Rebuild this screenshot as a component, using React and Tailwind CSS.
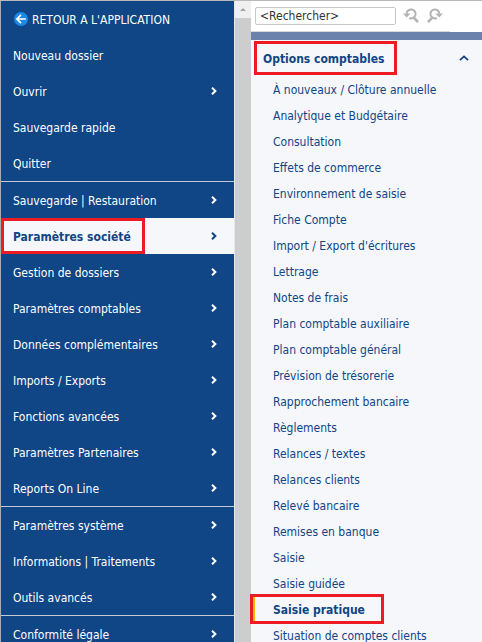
import React, { useState } from 'react';

const menuGroups = [
  [
    { label: 'Nouveau dossier' },
    { label: 'Ouvrir', sub: true },
    { label: 'Sauvegarde rapide' },
    { label: 'Quitter' },
  ],
  [
    { label: 'Sauvegarde | Restauration', sub: true },
    { label: 'Paramètres société', sub: true },
    { label: 'Gestion de dossiers', sub: true },
    { label: 'Paramètres comptables', sub: true },
    { label: 'Données complémentaires', sub: true },
    { label: 'Imports / Exports', sub: true },
    { label: 'Fonctions avancées', sub: true },
    { label: 'Paramètres Partenaires', sub: true },
    { label: 'Reports On Line', sub: true },
  ],
  [
    { label: 'Paramètres système', sub: true },
    { label: 'Informations | Traitements', sub: true },
    { label: 'Outils avancés', sub: true },
  ],
  [{ label: 'Conformité légale', sub: true }],
];

const options = [
  'À nouveaux / Clôture annuelle',
  'Analytique et Budgétaire',
  'Consultation',
  'Effets de commerce',
  'Environnement de saisie',
  'Fiche Compte',
  "Import / Export d'écritures",
  'Lettrage',
  'Notes de frais',
  'Plan comptable auxiliaire',
  'Plan comptable général',
  'Prévision de trésorerie',
  'Rapprochement bancaire',
  'Règlements',
  'Relances / textes',
  'Relances clients',
  'Relevé bancaire',
  'Remises en banque',
  'Saisie',
  'Saisie guidée',
  'Saisie pratique',
  'Situation de comptes clients',
];

const ChevronRight = () => (
  <svg viewBox="0 0 6 8" className="w-1.5 h-2 shrink-0" fill="none" stroke="currentColor" strokeWidth="2">
    <path d="M1 .7 4.4 4 1 7.3" />
  </svg>
);

const ChevronUp = ({ className = '' }) => (
  <svg viewBox="0 0 10 6" className={`w-2.5 h-1.5 shrink-0 ${className}`} fill="none" stroke="currentColor" strokeWidth="1.8">
    <path d="M1 5.2 5 1.4 9 5.2" />
  </svg>
);

const BackIcon = () => (
  <svg viewBox="0 0 14 14" className="w-3.5 h-3.5 shrink-0">
    <circle cx="7" cy="7" r="7" fill="#1e88e5" />
    <path d="M11.8 7H3.5M7 2.8 2.9 7 7 11.2" fill="none" stroke="#fff" strokeWidth="1.7" />
  </svg>
);

// Magnifier with an arrow head on its ring; the "next" one is mirrored
const SearchArrow = ({ flip }) => (
  <svg viewBox="0 0 16 16" className={`w-4 h-4 ${flip ? '-scale-x-100' : ''}`} fill="none" stroke="#b3b3b3" strokeWidth="2">
    <path d="M3.6 5.6A4.5 4.5 0 1 1 6.2 10" />
    <path d="M10.6 9.4 15 14.2" strokeWidth="2.6" />
    <path d="M0 5.4h7.6L3.8 9.4z" fill="#b3b3b3" stroke="none" />
  </svg>
);

export default function App() {
  const [active, setActive] = useState('Paramètres société');
  const [option, setOption] = useState('Saisie pratique');
  const [open, setOpen] = useState(true);

  return (
    <div className="flex h-screen overflow-hidden border-t border-[#b9b9b9] bg-[#f5f7fa] font-['DejaVu_Sans_Condensed','DejaVu_Sans',sans-serif] text-xs text-[#104586]">
      {/* Main menu */}
      <nav className="flex-none w-[235px] border-l border-[#a9adb3] border-r border-r-[#e4e6e9] bg-[#104586] text-white">
        <button className="flex items-center gap-1 w-full h-9 px-[13px]">
          <BackIcon />
          <span className="pt-0.5">RETOUR A L'APPLICATION</span>
        </button>
        {menuGroups.map((group, i) => (
          <div key={i} className={i > 0 ? 'border-t border-[#c3cad4]' : ''}>
            {group.map(item => {
              const isActive = item.label === active;
              return (
                <button
                  key={item.label}
                  onClick={() => setActive(item.label)}
                  className={`relative flex items-center justify-between w-full h-9 pl-3 pr-[17px] text-left ${isActive ? 'bg-[#f5f7fa] font-bold text-[#104586]' : ''}`}
                >
                  <span className="pt-0.5">{item.label}</span>
                  {item.sub && <ChevronRight />}
                  {isActive && <span className="absolute inset-y-0 left-0 w-36 border-3 border-[#ed1c24]" />}
                </button>
              );
            })}
          </div>
        ))}
      </nav>

      {/* Scrollbar */}
      <div className="flex-none w-4 bg-[#cdcdcd]">
        <div className="flex items-center justify-center h-[17px] bg-[#f0f0f0]">
          <span className="border-x-3 border-x-transparent border-b-3 border-b-[#a3a3a3]" />
        </div>
      </div>

      {/* Options */}
      <main className="flex-1 min-w-0">
        <div className="h-[31px] pr-8 bg-white">
          <div className="flex items-center h-full pl-1 border-b border-[#d9d9d9]">
            <input
              aria-label="Rechercher"
              defaultValue="<Rechercher>"
              className="w-[141px] h-[18px] px-1 border border-[#c8c8c8] rounded-xs bg-white text-[#333]"
            />
            <div className="flex gap-2 ml-[7px]">
              <button aria-label="Précédent"><SearchArrow /></button>
              <button aria-label="Suivant"><SearchArrow flip /></button>
            </div>
          </div>
        </div>
        <div className="h-2 bg-[#6b82ad]" />

        <button onClick={() => setOpen(!open)} className="relative flex items-center justify-between w-full h-9 pl-3 pr-[13px] font-bold">
          <span className="pt-0.5">Options comptables</span>
          <ChevronUp className={open ? '' : 'rotate-180'} />
          <span className="absolute inset-y-px left-[3px] w-[143px] border-3 border-[#ed1c24]" />
        </button>

        {open && (
          <ul>
            {options.map(label => {
              const isActive = label === option;
              return (
                <li key={label}>
                  <button
                    onClick={() => setOption(label)}
                    className={`relative flex items-center w-full h-[26px] pl-[22px] text-left ${isActive ? 'font-bold' : ''}`}
                  >
                    <span className="pt-0.5">{label}</span>
                    {isActive && (
                      <>
                        <span className="absolute inset-y-0 left-0 w-1 bg-[#ffb400]" />
                        <span className="absolute -inset-y-0.5 -left-px w-[134px] border-3 border-[#ed1c24]" />
                      </>
                    )}
                  </button>
                </li>
              );
            })}
          </ul>
        )}
      </main>
    </div>
  );
}
